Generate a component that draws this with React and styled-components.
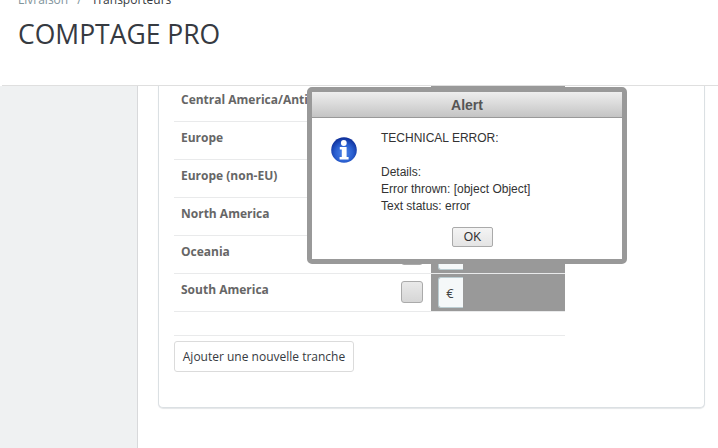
import React from "react";
import styled, { createGlobalStyle } from "styled-components";

const zones = ["Central America/Antilla", "Europe", "Europe (non-EU)", "North America", "Oceania", "South America"];

const App = () => {
  return (
    <Page>
      <Global />
      <Header>
        <Crumbs>
          <CrumbLink>Livraison</CrumbLink>
          <CrumbSep>/</CrumbSep>
          <span>Transporteurs</span>
        </Crumbs>
        <Title>COMPTAGE PRO</Title>
      </Header>
      <Main>
        <Sidebar />
        <Content>
          <Card>
            <Table>
              {zones.map((zone) => (
                <Row key={zone}>
                  <ZoneName>{zone}</ZoneName>
                  <CheckCell>
                    <Check />
                  </CheckCell>
                  <PriceCell>
                    <Addon>€</Addon>
                  </PriceCell>
                </Row>
              ))}
            </Table>
            <Footer>
              <AddButton>Ajouter une nouvelle tranche</AddButton>
            </Footer>
          </Card>
        </Content>
      </Main>
      <Dialog>
        <DialogTitle>Alert</DialogTitle>
        <DialogBody>
          <InfoIcon />
          <Message>
            TECHNICAL ERROR:
            <br />
            <br />
            Details:
            <br />
            Error thrown: [object Object]
            <br />
            Text status: error
          </Message>
        </DialogBody>
        <OkButton>OK</OkButton>
      </Dialog>
    </Page>
  );
};

export default App;

const InfoIcon = () => (
  <IconSvg viewBox="0 0 26 26">
    <defs>
      <radialGradient id="ball" cx="50%" cy="62%" r="62%">
        <stop offset="0" stopColor="#4f86ea" />
        <stop offset="0.55" stopColor="#2a5fd0" />
        <stop offset="1" stopColor="#0c2c96" />
      </radialGradient>
    </defs>
    <circle cx="13" cy="13" r="12.8" fill="url(#ball)" />
    <circle cx="12.8" cy="6" r="2.9" fill="#fff" />
    <path d="M8.8 10h6.8v10h2v2.6H8.6V20h2.2v-7.4H8.8z" fill="#fff" />
  </IconSvg>
);

const Global = createGlobalStyle`
  html, body {
    margin: 0;
    padding: 0;
    background: #fff;
    overflow: hidden;
  }
`;

const Page = styled.div`
  position: relative;
  width: 718px;
  height: 448px;
  overflow: hidden;
  font-family: "Open Sans", sans-serif;
  color: #363a41;
`;

const Header = styled.header`
  position: relative;
  z-index: 1;
  box-sizing: border-box;
  height: 86px;
  margin-left: 2px;
  padding: 0 16px;
  background: #fff;
  border-bottom: 1px solid #dfdfdf;
  overflow: hidden;
`;

const Crumbs = styled.div`
  display: flex;
  margin-top: -8px;
  font-size: 12px;
  line-height: 16px;
`;

const CrumbLink = styled.span`
  color: #7f949b;
`;

const CrumbSep = styled.span`
  margin: 0 10px 0 9px;
  color: #7f949b;
`;

const Title = styled.h1`
  margin: 8px 0 0;
  font-size: 26.5px;
  font-weight: 400;
  line-height: 36px;
`;

const Main = styled.main`
  display: flex;
  height: 362px;
`;

const Sidebar = styled.aside`
  box-sizing: border-box;
  width: 138px;
  background: #eff1f2;
  border-right: 1px solid #d8d9db;
`;

const Content = styled.div`
  flex: 1;
  padding: 0 13px 40px 20px;
`;

const Card = styled.section`
  box-sizing: border-box;
  height: 324px;
  margin-top: -2px;
  padding: 0 15px;
  background: #fff;
  border: 1px solid #dbe0e3;
  border-top: none;
  border-radius: 0 0 5px 5px;
  box-shadow: 0 1px 1px #e4e6e8;
`;

const Table = styled.div`
  width: 391px;
`;

const Row = styled.div`
  display: flex;
  box-sizing: border-box;
  height: 38px;
  border-bottom: 1px solid #e9eaeb;
`;

const ZoneName = styled.div`
  box-sizing: border-box;
  width: 219px;
  padding: 7px 0 0 7px;
  font-size: 12px;
  font-weight: 700;
  line-height: 18px;
  color: #666;
  white-space: nowrap;
`;

const CheckCell = styled.div`
  display: flex;
  flex: 1;
  justify-content: center;
  align-items: flex-start;
  padding-top: 7px;
`;

const Check = styled.div`
  box-sizing: border-box;
  width: 22px;
  height: 22px;
  background: linear-gradient(#e9e9e9, #d6d6d6);
  border: 1px solid #aaa;
  border-radius: 3px;
`;

const PriceCell = styled.div`
  display: flex;
  width: 134px;
  height: 37px;
  padding: 3px 0 0 7px;
  box-sizing: border-box;
  background: #999;
`;

const Addon = styled.div`
  display: flex;
  box-sizing: border-box;
  width: 25px;
  height: 31px;
  padding-right: 2px;
  align-items: center;
  justify-content: center;
  background: #f5f8f9;
  border: 1px solid #bbcdd2;
  border-right: none;
  border-radius: 3px 0 0 3px;
  font-size: 13px;
  color: #444;
`;

const Footer = styled.div`
  width: 391px;
  margin-top: 23px;
  padding-top: 5px;
  border-top: 1px solid #e9eaeb;
`;

const AddButton = styled.button`
  box-sizing: border-box;
  width: 180px;
  height: 31px;
  padding: 0;
  background: #fff;
  border: 1px solid #dbdbdb;
  border-radius: 3px;
  font-family: "Open Sans", sans-serif;
  font-size: 12px;
  color: #363a41;
`;

const Dialog = styled.div`
  position: absolute;
  z-index: 2;
  top: 87px;
  left: 307px;
  box-sizing: border-box;
  width: 320px;
  height: 177px;
  background: #fff;
  border: 5px solid #999;
  border-radius: 5px;
  font-family: "Liberation Sans", Arial, sans-serif;
  color: #333;
`;

const DialogTitle = styled.div`
  box-sizing: border-box;
  height: 26px;
  background: linear-gradient(#eee, #c4c4c4);
  border-bottom: 1px solid #999;
  font-size: 14px;
  font-weight: 700;
  line-height: 27px;
  text-align: center;
  color: #555;
`;

const DialogBody = styled.div`
  display: flex;
  padding: 12px 0 0 19px;
`;

const IconSvg = styled.svg`
  flex: none;
  width: 26px;
  height: 26px;
  margin-top: 7px;
`;

const Message = styled.div`
  margin-left: 24px;
  font-size: 12px;
  line-height: 17px;
`;

const OkButton = styled.button`
  display: block;
  box-sizing: border-box;
  width: 41px;
  height: 20px;
  margin: 12px 0 0 140px;
  padding: 0;
  background: linear-gradient(#f4f4f4, #e4e4e4);
  border: 1px solid #aaa;
  border-radius: 2px;
  font-family: "Liberation Sans", Arial, sans-serif;
  font-size: 12px;
  color: #333;
`;
